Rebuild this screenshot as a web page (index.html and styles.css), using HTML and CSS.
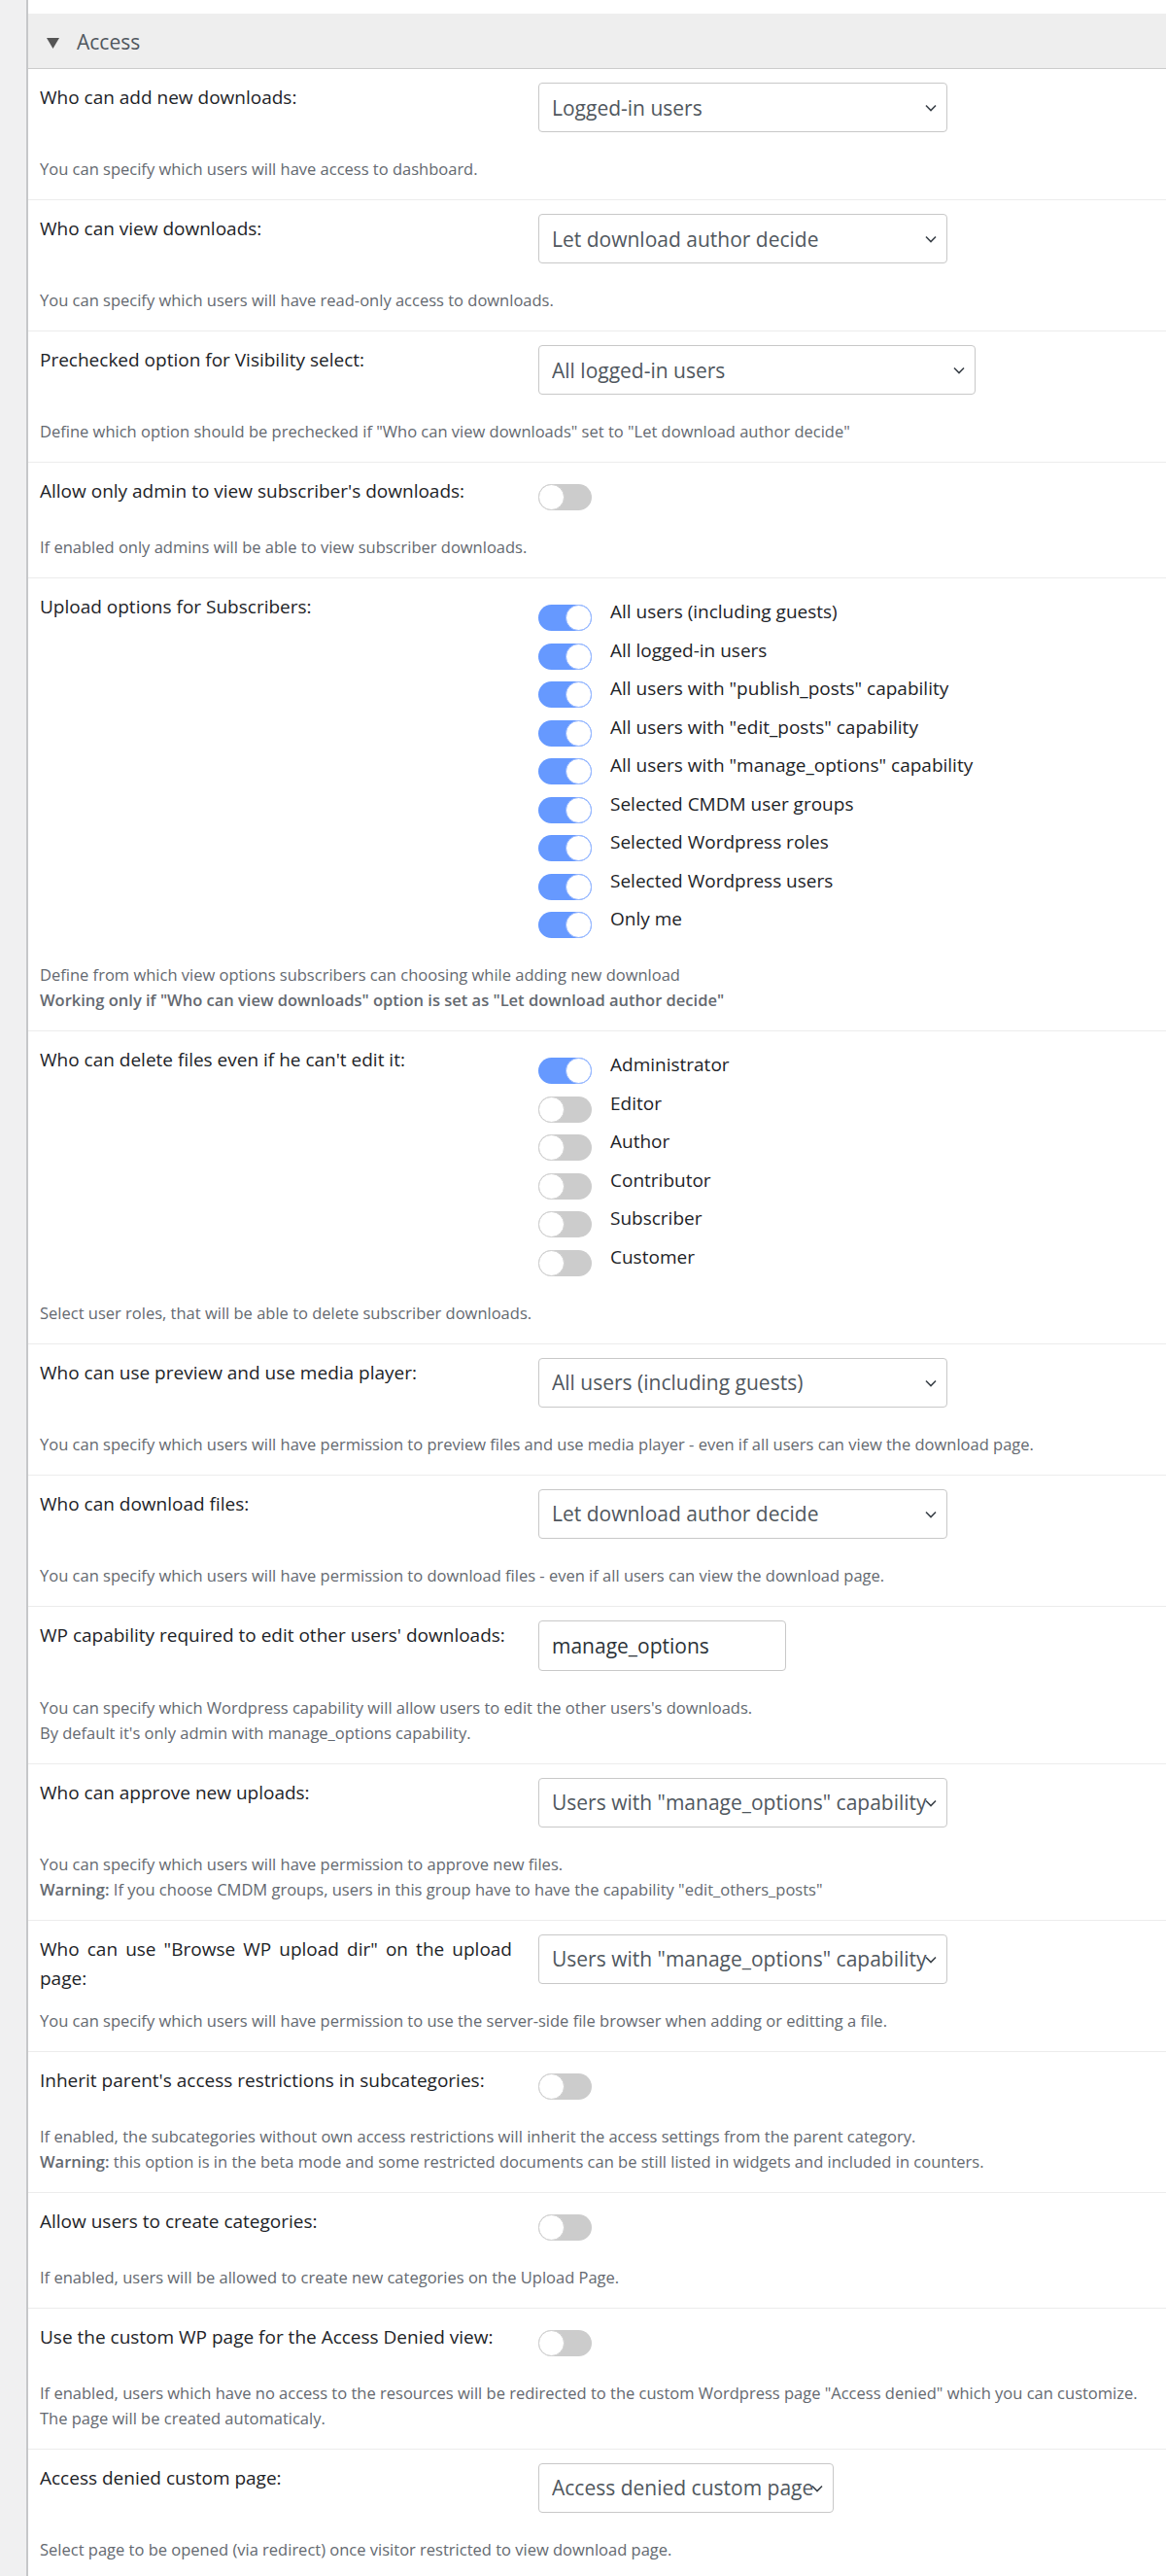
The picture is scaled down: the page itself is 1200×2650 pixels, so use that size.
FILE: index.html
```html
<!DOCTYPE html>
<html lang="en">
<head>
<meta charset="utf-8">
<title>Access settings</title>
<link rel="stylesheet" href="styles.css">
</head>
<body>
<div class="page">
  <div class="sidebar"></div>
  <main class="main">
    <div class="section-head">
      <svg class="caret" width="13" height="12" viewBox="0 0 13 12"><polygon points="0,1 13,1 6.5,12" fill="#555"/></svg>
      <span class="section-title">Access</span>
    </div>

    <div class="row">
      <div class="row-top">
        <div class="label">Who can add new downloads:</div>
        <div class="control">
          <div class="select w-420"><span class="sel-text">Logged-in users</span><svg class="chev" width="12" height="8" viewBox="0 0 12 8"><polyline points="1,1.5 6,6.5 11,1.5" fill="none" stroke="#3c434a" stroke-width="1.6"/></svg></div>
        </div>
      </div>
      <p class="desc">You can specify which users will have access to dashboard.</p>
    </div>

    <div class="row">
      <div class="row-top">
        <div class="label">Who can view downloads:</div>
        <div class="control">
          <div class="select w-420"><span class="sel-text">Let download author decide</span><svg class="chev" width="12" height="8" viewBox="0 0 12 8"><polyline points="1,1.5 6,6.5 11,1.5" fill="none" stroke="#3c434a" stroke-width="1.6"/></svg></div>
        </div>
      </div>
      <p class="desc">You can specify which users will have read-only access to downloads.</p>
    </div>

    <div class="row">
      <div class="row-top">
        <div class="label">Prechecked option for Visibility select:</div>
        <div class="control">
          <div class="select w-450"><span class="sel-text">All logged-in users</span><svg class="chev" width="12" height="8" viewBox="0 0 12 8"><polyline points="1,1.5 6,6.5 11,1.5" fill="none" stroke="#3c434a" stroke-width="1.6"/></svg></div>
        </div>
      </div>
      <p class="desc">Define which option should be prechecked if "Who can view downloads" set to "Let download author decide"</p>
    </div>

    <div class="row">
      <div class="row-top">
        <div class="label">Allow only admin to view subscriber's downloads:</div>
        <div class="control">
          <div class="toggle-single"><span class="toggle"><span class="knob"></span></span></div>
        </div>
      </div>
      <p class="desc">If enabled only admins will be able to view subscriber downloads.</p>
    </div>

    <div class="row">
      <div class="row-top">
        <div class="label">Upload options for Subscribers:</div>
        <div class="control">
          <ul class="toggle-list">
            <li class="toggle-item"><span class="toggle on"><span class="knob"></span></span><span class="item-label">All users (including guests)</span></li>
            <li class="toggle-item"><span class="toggle on"><span class="knob"></span></span><span class="item-label">All logged-in users</span></li>
            <li class="toggle-item"><span class="toggle on"><span class="knob"></span></span><span class="item-label">All users with "publish_posts" capability</span></li>
            <li class="toggle-item"><span class="toggle on"><span class="knob"></span></span><span class="item-label">All users with "edit_posts" capability</span></li>
            <li class="toggle-item"><span class="toggle on"><span class="knob"></span></span><span class="item-label">All users with "manage_options" capability</span></li>
            <li class="toggle-item"><span class="toggle on"><span class="knob"></span></span><span class="item-label">Selected CMDM user groups</span></li>
            <li class="toggle-item"><span class="toggle on"><span class="knob"></span></span><span class="item-label">Selected Wordpress roles</span></li>
            <li class="toggle-item"><span class="toggle on"><span class="knob"></span></span><span class="item-label">Selected Wordpress users</span></li>
            <li class="toggle-item"><span class="toggle on"><span class="knob"></span></span><span class="item-label">Only me</span></li>
          </ul>
        </div>
      </div>
      <p class="desc">Define from which view options subscribers can choosing while adding new download<br><strong>Working only if "Who can view downloads" option is set as "Let download author decide"</strong></p>
    </div>

    <div class="row">
      <div class="row-top">
        <div class="label">Who can delete files even if he can't edit it:</div>
        <div class="control">
          <ul class="toggle-list">
            <li class="toggle-item"><span class="toggle on"><span class="knob"></span></span><span class="item-label">Administrator</span></li>
            <li class="toggle-item"><span class="toggle"><span class="knob"></span></span><span class="item-label">Editor</span></li>
            <li class="toggle-item"><span class="toggle"><span class="knob"></span></span><span class="item-label">Author</span></li>
            <li class="toggle-item"><span class="toggle"><span class="knob"></span></span><span class="item-label">Contributor</span></li>
            <li class="toggle-item"><span class="toggle"><span class="knob"></span></span><span class="item-label">Subscriber</span></li>
            <li class="toggle-item"><span class="toggle"><span class="knob"></span></span><span class="item-label">Customer</span></li>
          </ul>
        </div>
      </div>
      <p class="desc">Select user roles, that will be able to delete subscriber downloads.</p>
    </div>

    <div class="row">
      <div class="row-top">
        <div class="label">Who can use preview and use media player:</div>
        <div class="control">
          <div class="select w-420"><span class="sel-text">All users (including guests)</span><svg class="chev" width="12" height="8" viewBox="0 0 12 8"><polyline points="1,1.5 6,6.5 11,1.5" fill="none" stroke="#3c434a" stroke-width="1.6"/></svg></div>
        </div>
      </div>
      <p class="desc">You can specify which users will have permission to preview files and use media player - even if all users can view the download page.</p>
    </div>

    <div class="row">
      <div class="row-top">
        <div class="label">Who can download files:</div>
        <div class="control">
          <div class="select w-420"><span class="sel-text">Let download author decide</span><svg class="chev" width="12" height="8" viewBox="0 0 12 8"><polyline points="1,1.5 6,6.5 11,1.5" fill="none" stroke="#3c434a" stroke-width="1.6"/></svg></div>
        </div>
      </div>
      <p class="desc">You can specify which users will have permission to download files - even if all users can view the download page.</p>
    </div>

    <div class="row">
      <div class="row-top">
        <div class="label">WP capability required to edit other users' downloads:</div>
        <div class="control">
          <div class="text-input">manage_options</div>
        </div>
      </div>
      <p class="desc">You can specify which Wordpress capability will allow users to edit the other users's downloads.<br>By default it's only admin with manage_options capability.</p>
    </div>

    <div class="row">
      <div class="row-top">
        <div class="label">Who can approve new uploads:</div>
        <div class="control">
          <div class="select w-420"><span class="sel-text">Users with "manage_options" capability</span><svg class="chev" width="12" height="8" viewBox="0 0 12 8"><polyline points="1,1.5 6,6.5 11,1.5" fill="none" stroke="#3c434a" stroke-width="1.6"/></svg></div>
        </div>
      </div>
      <p class="desc">You can specify which users will have permission to approve new files.<br><strong>Warning:</strong> If you choose CMDM groups, users in this group have to have the capability "edit_others_posts"</p>
    </div>

    <div class="row">
      <div class="row-top">
        <div class="label">Who can use "Browse WP upload dir" on the upload page:</div>
        <div class="control">
          <div class="select w-420"><span class="sel-text">Users with "manage_options" capability</span><svg class="chev" width="12" height="8" viewBox="0 0 12 8"><polyline points="1,1.5 6,6.5 11,1.5" fill="none" stroke="#3c434a" stroke-width="1.6"/></svg></div>
        </div>
      </div>
      <p class="desc">You can specify which users will have permission to use the server-side file browser when adding or editting a file.</p>
    </div>

    <div class="row">
      <div class="row-top">
        <div class="label">Inherit parent's access restrictions in subcategories:</div>
        <div class="control">
          <div class="toggle-single"><span class="toggle"><span class="knob"></span></span></div>
        </div>
      </div>
      <p class="desc">If enabled, the subcategories without own access restrictions will inherit the access settings from the parent category.<br><strong>Warning:</strong> this option is in the beta mode and some restricted documents can be still listed in widgets and included in counters.</p>
    </div>

    <div class="row">
      <div class="row-top">
        <div class="label">Allow users to create categories:</div>
        <div class="control">
          <div class="toggle-single"><span class="toggle"><span class="knob"></span></span></div>
        </div>
      </div>
      <p class="desc">If enabled, users will be allowed to create new categories on the Upload Page.</p>
    </div>

    <div class="row">
      <div class="row-top">
        <div class="label">Use the custom WP page for the Access Denied view:</div>
        <div class="control">
          <div class="toggle-single"><span class="toggle"><span class="knob"></span></span></div>
        </div>
      </div>
      <p class="desc">If enabled, users which have no access to the resources will be redirected to the custom Wordpress page "Access denied" which you can customize.<br>The page will be created automaticaly.</p>
    </div>

    <div class="row last">
      <div class="row-top">
        <div class="label">Access denied custom page:</div>
        <div class="control">
          <div class="select w-304"><span class="sel-text">Access denied custom page</span><svg class="chev" width="12" height="8" viewBox="0 0 12 8"><polyline points="1,1.5 6,6.5 11,1.5" fill="none" stroke="#3c434a" stroke-width="1.6"/></svg></div>
        </div>
      </div>
      <p class="desc">Select page to be opened (via redirect) once visitor restricted to view download page.</p>
    </div>
  </main>
</div>
</body>
</html>
```

FILE: styles.css
```css
* { box-sizing: border-box; }

html, body {
  margin: 0;
  padding: 0;
  background: #ffffff;
}

body {
  font-family: "Open Sans", "Noto Sans", "DejaVu Sans", sans-serif;
  color: #1d2327;
}

.page {
  display: flex;
  min-height: 2650px;
}

.sidebar {
  flex: 0 0 29px;
  background: #f0f0f1;
  border-right: 2px solid #c6c7c9;
}

.main {
  flex: 1 1 auto;
  padding-top: 14px;
}

.section-head {
  display: flex;
  align-items: center;
  height: 57px;
  background: #eeeeee;
  border-bottom: 1px solid #cccccc;
  padding-left: 19px;
}

.caret {
  display: block;
  margin-right: 18px;
  margin-top: 3px;
}

.section-title {
  font-size: 21px;
  color: #50575e;
  line-height: 30px;
  padding-top: 2px;
}

.row {
  padding: 14px 12px 18px;
  border-bottom: 1px solid #ececec;
}

.row.last {
  border-bottom: none;
}

.row-top {
  display: flex;
  align-items: flex-start;
}

.label {
  flex: 0 0 486px;
  margin-right: 27px;
  margin-bottom: 14px;
  font-size: 19px;
  line-height: 30px;
  color: #1d2327;
  text-align: justify;
}

.control {
  margin-bottom: 25px;
}

.select {
  position: relative;
  display: flex;
  align-items: center;
  height: 51px;
  border: 1px solid #c8c8c8;
  border-radius: 4px;
  background: #fff;
  padding: 0 8px 0 13px;
  overflow: hidden;
}

.w-420 { width: 421px; }
.w-450 { width: 450px; }
.w-304 { width: 304px; }

.sel-text {
  font-size: 21px;
  color: #50575e;
  white-space: nowrap;
  overflow: hidden;
}

.chev {
  position: absolute;
  right: 10px;
  top: 21px;
}

.text-input {
  display: flex;
  align-items: center;
  width: 255px;
  height: 52px;
  border: 1px solid #c8c8c8;
  border-radius: 4px;
  padding: 0 13px;
  font-size: 21px;
  color: #2c3338;
}

.toggle-single {
  padding-top: 8px;
}

.toggle {
  display: flex;
  justify-content: flex-start;
  flex: 0 0 55px;
  width: 55px;
  height: 27px;
  border-radius: 14px;
  background: #cccccc;
}

.toggle.on {
  justify-content: flex-end;
  background: #6699ff;
}

.knob {
  display: block;
  width: 27px;
  height: 27px;
  border-radius: 50%;
  background: #ffffff;
  border: 1px solid #cfcfcf;
}

.toggle.on .knob {
  border-color: #94b6ff;
}

.toggle-list {
  list-style: none;
  margin: 0;
  padding: 5px 0 0;
  display: flex;
  flex-direction: column;
  gap: 4.5px;
}

.toggle-item {
  display: flex;
  align-items: flex-start;
}

.toggle-item .toggle {
  margin-top: 8px;
  margin-right: 19px;
}

.item-label {
  font-size: 19px;
  line-height: 30px;
  color: #1d2327;
  white-space: nowrap;
}

.desc {
  margin: 0;
  font-size: 16.5px;
  line-height: 26px;
  color: #646970;
}

.desc strong {
  font-weight: 600;
}
```
